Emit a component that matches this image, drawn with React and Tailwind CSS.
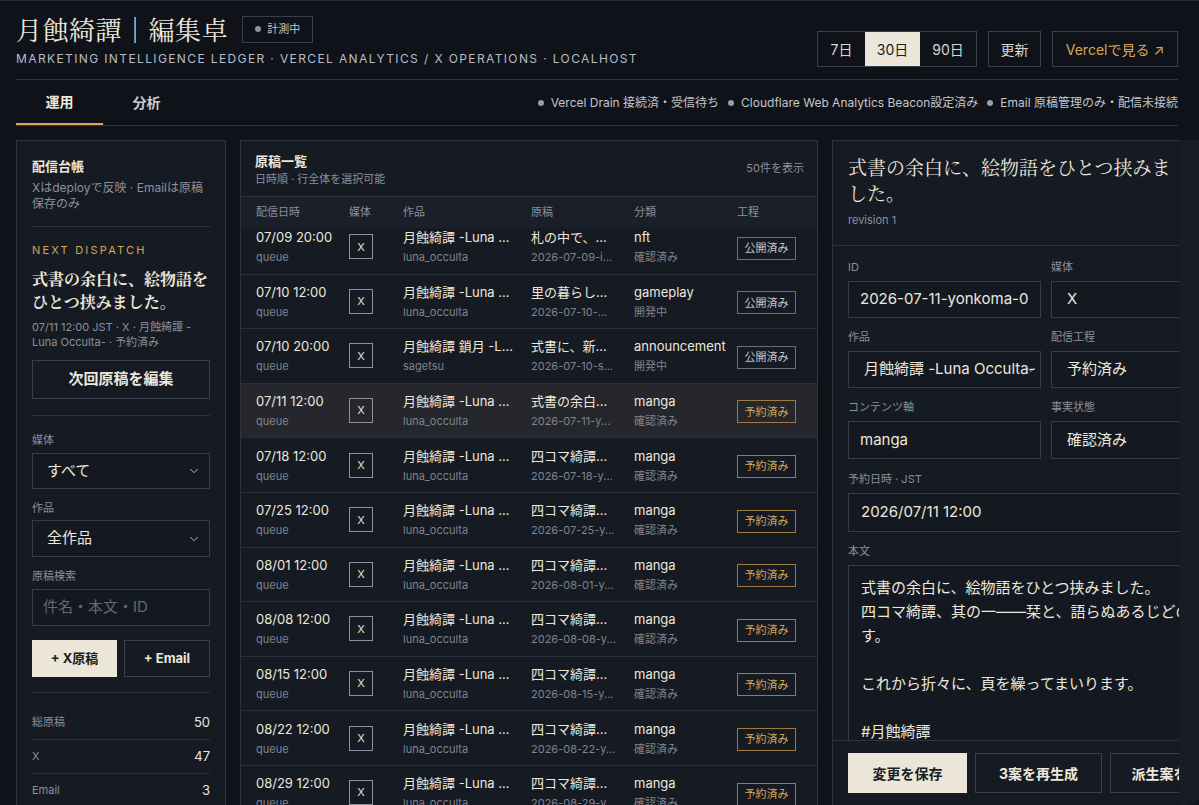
import { ChevronDown } from 'lucide-react';

const rows = [
  { date: '07/09 20:00', work: '月蝕綺譚 -Luna ...', handle: 'luna_occulta', title: '札の中で、...', id: '2026-07-09-i...', cat: 'nft', fact: '確認済み', stage: '公開済み' },
  { date: '07/10 12:00', work: '月蝕綺譚 -Luna ...', handle: 'luna_occulta', title: '里の暮らし...', id: '2026-07-10-...', cat: 'gameplay', fact: '開発中', stage: '公開済み' },
  { date: '07/10 20:00', work: '月蝕綺譚 鎖月 -L...', handle: 'sagetsu', title: '式書に、新...', id: '2026-07-10-s...', cat: 'announcement', fact: '開発中', stage: '公開済み' },
  { date: '07/11 12:00', work: '月蝕綺譚 -Luna ...', handle: 'luna_occulta', title: '式書の余白...', id: '2026-07-11-y...', cat: 'manga', fact: '確認済み', stage: '予約済み', active: true },
  { date: '07/18 12:00', work: '月蝕綺譚 -Luna ...', handle: 'luna_occulta', title: '四コマ綺譚...', id: '2026-07-18-y...', cat: 'manga', fact: '確認済み', stage: '予約済み' },
  { date: '07/25 12:00', work: '月蝕綺譚 -Luna ...', handle: 'luna_occulta', title: '四コマ綺譚...', id: '2026-07-25-y...', cat: 'manga', fact: '確認済み', stage: '予約済み' },
  { date: '08/01 12:00', work: '月蝕綺譚 -Luna ...', handle: 'luna_occulta', title: '四コマ綺譚...', id: '2026-08-01-y...', cat: 'manga', fact: '確認済み', stage: '予約済み' },
  { date: '08/08 12:00', work: '月蝕綺譚 -Luna ...', handle: 'luna_occulta', title: '四コマ綺譚...', id: '2026-08-08-y...', cat: 'manga', fact: '確認済み', stage: '予約済み' },
  { date: '08/15 12:00', work: '月蝕綺譚 -Luna ...', handle: 'luna_occulta', title: '四コマ綺譚...', id: '2026-08-15-y...', cat: 'manga', fact: '確認済み', stage: '予約済み' },
  { date: '08/22 12:00', work: '月蝕綺譚 -Luna ...', handle: 'luna_occulta', title: '四コマ綺譚...', id: '2026-08-22-y...', cat: 'manga', fact: '確認済み', stage: '予約済み' },
  { date: '08/29 12:00', work: '月蝕綺譚 -Luna ...', handle: 'luna_occulta', title: '四コマ綺譚...', id: '2026-08-29-y...', cat: 'manga', fact: '確認済み', stage: '予約済み' },
];

const serif = "font-['Noto_Serif_CJK_JP','Liberation_Serif','Noto_Sans_CJK_JP',serif]";

function Label({ children }) {
  return <div className="text-[11px] leading-4 text-[#8b909b]">{children}</div>;
}

function Field({ children, chevron, className = '' }) {
  return (
    <div className={`relative flex items-center border border-[#363b48] bg-[#141821] text-[15px] text-[#ece8dc] ${className}`}>
      {children}
      {chevron && <ChevronDown className="absolute right-2 w-3.5 h-3.5 text-[#c9ccd2]" strokeWidth={1.5} />}
    </div>
  );
}

function Stat({ label, value }) {
  return (
    <div className="flex h-[34px] items-center justify-between border-b border-[#2a2f3b]">
      <span className="text-[11px] text-[#8b909b]">{label}</span>
      <span className="text-[13px] text-[#ece8dc]">{value}</span>
    </div>
  );
}

function Row({ r }) {
  const done = r.stage === '公開済み';
  return (
    <div className={`grid h-[54.6px] grid-cols-[93px_54px_128px_103px_103px_1fr] items-center border-b border-[#2a2f3b] pl-[15px] ${r.active ? 'bg-[#25272d]' : ''}`}>
      <div className="flex flex-col gap-[3px]">
        <span className="text-[13px] leading-[18px] text-[#ece8dc]">{r.date}</span>
        <span className="text-[11px] leading-4 text-[#7f848f]">queue</span>
      </div>
      <div>
        <div className="flex h-[25px] w-6 items-center justify-center border border-[#8d929c] text-[11px] text-[#e2e0d8]">X</div>
      </div>
      <div className="flex flex-col gap-[3px] whitespace-nowrap">
        <span className="text-[13px] leading-[18px] text-[#ece8dc]">{r.work}</span>
        <span className="text-[11px] leading-4 text-[#7f848f]">{r.handle}</span>
      </div>
      <div className="flex flex-col gap-[3px] whitespace-nowrap">
        <span className="text-[13px] leading-[18px] text-[#ece8dc]">{r.title}</span>
        <span className="text-[11px] leading-4 text-[#7f848f]">{r.id}</span>
      </div>
      <div className="flex flex-col gap-[3px] whitespace-nowrap">
        <span className="text-[13px] leading-[18px] text-[#ece8dc]">{r.cat}</span>
        <span className="text-[11px] leading-4 text-[#7f848f]">{r.fact}</span>
      </div>
      <div>
        <span className={`inline-flex h-[23px] w-[59px] items-center justify-center border text-[11px] ${done ? 'border-[#6a6f7c] text-[#c5c7cc]' : 'border-[#9c7c3c] text-[#d4a857]'}`}>
          {r.stage}
        </span>
      </div>
    </div>
  );
}

export default function App() {
  return (
    <div className="h-[805px] w-[1199px] overflow-hidden border-t border-[#262a34] bg-[#0f1219] font-[Inter,'Noto_Sans_CJK_JP',sans-serif] text-[#ece8dc]">
      <div className="pl-4 pr-[21px]">
        {/* header */}
        <div className="flex items-end justify-between border-b border-[#2e333f] pb-3 pt-[12px]">
          <div>
            <div className="flex items-center gap-[14px]">
              <h1 className={`${serif} text-[26px] leading-[32px] tracking-[0.02em] text-[#ece8dc]`}>月蝕綺譚｜編集卓</h1>
              <span className="flex h-[27px] items-center gap-1.5 border border-[#3a3f4c] px-3 text-[11px] text-[#c0c3ca]">
                <span className="h-[6px] w-[6px] rounded-full bg-[#8f949e]" />
                計測中
              </span>
            </div>
            <div className="mt-[6px] text-[12px] leading-4 tracking-[0.115em] text-[#b9bdc6]">
              MARKETING INTELLIGENCE LEDGER · VERCEL ANALYTICS / X OPERATIONS · LOCALHOST
            </div>
          </div>
          <div className="flex items-center gap-[11px] text-[14px]">
            <div className="flex h-9 border border-[#3a3f4c]">
              <button className="w-[47px] text-[#d8d6cf]">7日</button>
              <button className="w-[55px] bg-[#ebe6d9] text-[#1a1c22]">30日</button>
              <button className="w-[56px] text-[#d8d6cf]">90日</button>
            </div>
            <button className="h-9 w-[53px] border border-[#3a3f4c] text-[#d8d6cf]">更新</button>
            <button className="h-9 w-[126px] border border-[#3a3f4c] text-[#d4a857]">Vercelで見る ↗</button>
          </div>
        </div>

        {/* tabs */}
        <div className="flex h-[46px] items-stretch justify-between overflow-hidden border-b border-[#2e333f]">
          <div className="flex shrink-0">
            <div className="flex w-[87px] items-center justify-center border-b-2 border-[#d4a857] text-[14px] font-semibold text-[#ece8dc]">運用</div>
            <div className="flex w-[87px] items-center justify-center text-[14px] font-semibold text-[#c9ccd2]">分析</div>
          </div>
          <div className="flex items-center gap-[9px] whitespace-nowrap text-[12px] text-[#c3c6cc]">
            <span className="flex items-center gap-[7px]"><span className="h-[6px] w-[6px] rounded-full bg-[#9a9ea8]" />Vercel Drain 接続済・受信待ち</span>
            <span className="flex items-center gap-[7px]"><span className="h-[6px] w-[6px] rounded-full bg-[#9a9ea8]" />Cloudflare Web Analytics Beacon設定済み</span>
            <span className="flex items-center gap-[7px]"><span className="h-[6px] w-[6px] rounded-full bg-[#9a9ea8]" />Email 原稿管理のみ・配信未接続</span>
          </div>
        </div>
      </div>

      {/* main */}
      <div className="mt-[14px] flex items-start pl-4">
        {/* left panel */}
        <aside className="w-[210px] shrink-0 border border-[#2e333f] bg-[#161a23] px-[15px] pb-4 pt-[15px]">
          <div className="text-[13px] font-bold leading-5">配信台帳</div>
          <div className="mt-1 text-[12px] leading-4 text-[#8b909b]">Xはdeployで反映 · Emailは原稿保存のみ</div>
          <div className="mt-[14px] border-t border-[#2e333f]" />
          <div className="mt-[15px] text-[11px] leading-4 tracking-[0.2em] text-[#d4a857]">NEXT DISPATCH</div>
          <div className={`${serif} mt-[9px] text-[16px] font-bold leading-[23px]`}>式書の余白に、絵物語をひとつ挟みました。</div>
          <div className="mt-[7px] text-[11px] leading-[15px] text-[#8b909b]">07/11 12:00 JST · X · 月蝕綺譚 -Luna Occulta- · 予約済み</div>
          <button className="mt-[10px] h-[39px] w-full border border-[#3a3f4c] text-[15px] font-bold text-[#ece8dc]">次回原稿を編集</button>
          <div className="mt-4 border-t border-[#2e333f]" />
          <div className="mt-4"><Label>媒体</Label></div>
          <Field chevron className="mt-[5px] h-9 pl-[14px]">すべて</Field>
          <div className="mt-[11px]"><Label>作品</Label></div>
          <Field chevron className="mt-1 h-[37px] pl-[14px]">全作品</Field>
          <div className="mt-[11px]"><Label>原稿検索</Label></div>
          <Field className="mt-[5px] h-[37px] pl-[10px]"><span className="text-[#646975]">件名・本文・ID</span></Field>
          <div className="mt-[14px] flex gap-[7px]">
            <button className="h-[37px] w-[85px] bg-[#ebe6d9] text-[13px] font-bold text-[#1a1c22]">+ X原稿</button>
            <button className="h-[37px] flex-1 border border-[#3a3f4c] text-[13px] font-bold text-[#ece8dc]">+ Email</button>
          </div>
          <div className="mt-[15px] border-t border-[#2e333f]" />
          <div className="mt-[13px]">
            <Stat label="総原稿" value="50" />
            <Stat label="X" value="47" />
            <Stat label="Email" value="3" />
          </div>
        </aside>

        {/* middle panel */}
        <section className="ml-[14px] h-[700px] w-[578px] shrink-0 overflow-hidden border border-[#2e333f] bg-[#161a23]">
          <div className="flex h-[56px] items-center justify-between border-b border-[#2e333f] pl-[14px] pr-[13px]">
            <div>
              <div className="text-[13px] font-bold leading-5">原稿一覧</div>
              <div className="text-[11px] leading-4 text-[#8b909b]">日時順 · 行全体を選択可能</div>
            </div>
            <div className="text-[11px] text-[#8b909b]">50件を表示</div>
          </div>
          <div className="relative z-10 grid h-[31px] grid-cols-[93px_54px_128px_103px_103px_1fr] items-center bg-[#1b1f29] pl-[15px] text-[11px] text-[#8b909b]">
            <span>配信日時</span>
            <span>媒体</span>
            <span>作品</span>
            <span>原稿</span>
            <span>分類</span>
            <span>工程</span>
          </div>
          <div className="-mt-[8px]">
            {rows.map((r) => (
              <Row key={r.date + r.title} r={r} />
            ))}
          </div>
        </section>

        {/* right panel, clipped by the viewport edge */}
        <div className="ml-[14px] w-[347px] shrink-0 overflow-hidden">
          <section className="flex h-[684px] w-[428px] flex-col border border-[#2e333f] bg-[#161a23]">
            <div className="border-b border-[#2e333f] px-[15px] pb-[17px] pt-[13px]">
              <div className={`${serif} max-w-[330px] text-[19px] leading-[26px] text-[#ece8dc]`}>式書の余白に、絵物語をひとつ挟みました。</div>
              <div className="mt-[6px] text-[11px] leading-4 text-[#8b909b]">revision 1</div>
            </div>
            <div className="flex-1 overflow-hidden px-[15px] pt-[13px]">
              <div className="grid grid-cols-2 gap-x-[10px]">
                <div>
                  <Label>ID</Label>
                  <Field className="mt-[6px] h-[37px] pl-[11px]">2026-07-11-yonkoma-0</Field>
                </div>
                <div>
                  <Label>媒体</Label>
                  <Field className="mt-[6px] h-[37px] pl-[15px]">X</Field>
                </div>
                <div className="mt-[11px]">
                  <Label>作品</Label>
                  <Field className="mt-[6px] h-[37px] overflow-hidden whitespace-nowrap pl-[15px]">
                    月蝕綺譚 -Luna Occulta-
                    <ChevronDown className="absolute right-[3px] h-3 w-3 text-[#c9ccd2]" strokeWidth={1.5} />
                  </Field>
                </div>
                <div className="mt-[11px]">
                  <Label>配信工程</Label>
                  <Field className="mt-[6px] h-[37px] pl-[15px]">予約済み</Field>
                </div>
                <div className="mt-[11px]">
                  <Label>コンテンツ軸</Label>
                  <Field className="mt-[6px] h-[38px] pl-[11px]">manga</Field>
                </div>
                <div className="mt-[11px]">
                  <Label>事実状態</Label>
                  <Field className="mt-[6px] h-[38px] pl-[15px]">確認済み</Field>
                </div>
              </div>
              <div className="mt-[12px]"><Label>予約日時 · JST</Label></div>
              <Field className="mt-[6px] h-[39px] pl-[12px]">2026/07/11 12:00</Field>
              <div className="mt-[11px]"><Label>本文</Label></div>
              <div className="mt-[6px] h-[260px] border border-[#363b48] bg-[#141821] px-[12px] pt-[10px] text-[15px] leading-[24px] text-[#ece8dc]">
                <p>式書の余白に、絵物語をひとつ挟みました。</p>
                <p>四コマ綺譚、其の一——栞と、語らぬあるじどのです。</p>
                <p className="h-6" />
                <p>これから折々に、頁を繰ってまいります。</p>
                <p className="h-6" />
                <p>#月蝕綺譚</p>
              </div>
            </div>
            <div className="flex gap-2 border-t border-[#2e333f] px-[15px] pb-[30px] pt-3 text-[14px] font-bold">
              <button className="h-10 w-[119px] shrink-0 bg-[#ebe6d9] text-[#1a1c22]">変更を保存</button>
              <button className="h-10 w-[127px] shrink-0 border border-[#3a3f4c] text-[#ece8dc]">3案を再生成</button>
              <button className="h-10 w-[127px] shrink-0 border border-[#3a3f4c] text-[#ece8dc]">派生案を作成</button>
            </div>
          </section>
        </div>
        <div className="h-[665px] w-[21px] shrink-0 rounded-br-xl bg-[#191c24]" />
      </div>
    </div>
  );
}
